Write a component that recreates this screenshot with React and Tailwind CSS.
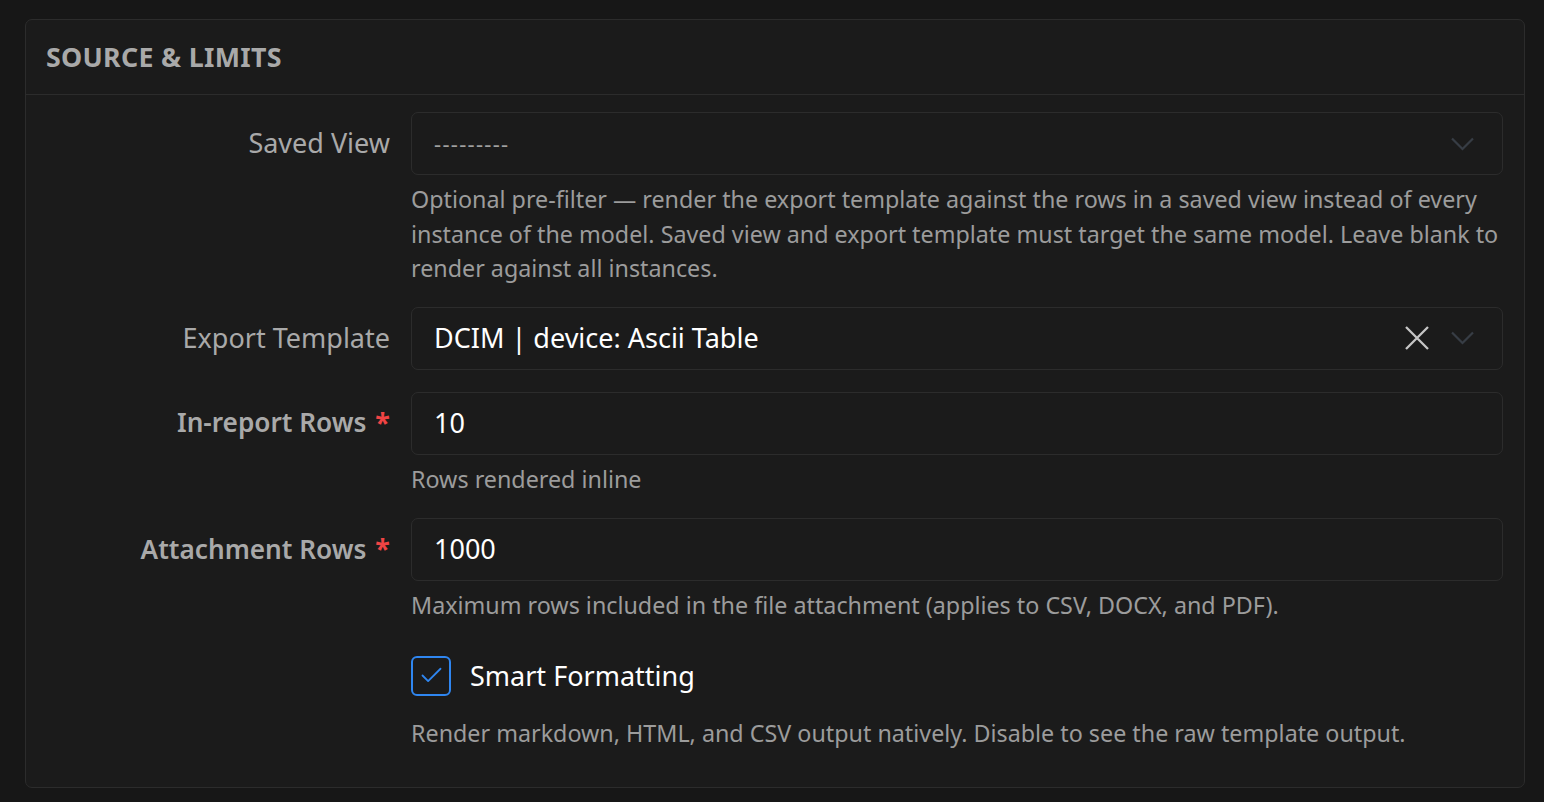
import { Check } from "lucide-react";

const font = { fontFamily: '"Noto Sans", "Open Sans", sans-serif' };

const Label = ({ children, required }) => (
  <div className="h-[63px] flex items-center justify-end text-[27px] text-[#a9a9a9]">
    <span className={required ? "font-semibold text-[26.2px]" : ""}>{children}</span>
    {required && <span className="ml-[9px] text-[#f04444] font-bold">*</span>}
  </div>
);

const Help = ({ children, className = "mt-[7px]" }) => (
  <p className={`${className} text-[23.3px] leading-[34.5px] text-[#9c9c9c]`}>{children}</p>
);

const Chevron = () => (
  <svg width="23" height="14" viewBox="0 0 23 14" fill="none" className="text-[#373d45]">
    <polyline points="1,1.5 11.5,12 22,1.5" stroke="currentColor" strokeWidth="2.2" />
  </svg>
);

const Clear = () => (
  <svg width="24" height="24" viewBox="0 0 24 24" fill="none" className="text-[#c6c6c6]">
    <path d="M1 1 23 23M23 1 1 23" stroke="currentColor" strokeWidth="2.3" />
  </svg>
);

const App = () => {
  return (
    <div className="min-h-screen bg-[#171717] pt-[19px] pl-[25px] pr-[19px] pb-[13px]" style={font}>
      <div className="rounded-[7px] border border-[#2c2c2c] bg-[#1b1b1b]">
        {/* Header */}
        <div className="h-[75px] flex items-center px-[20px] border-b border-[#2c2c2c]">
          <h2 className="text-[26.8px] font-bold tracking-[0.3px] text-[#a9a9a9]">
            SOURCE &amp; LIMITS
          </h2>
        </div>

        {/* Fields */}
        <div className="grid grid-cols-[364px_1fr] gap-x-[21px] pt-[17px] pr-[21px] pb-[36px]">
          {/* Saved View */}
          <Label>Saved View</Label>
          <div className="mb-[21px]">
            <div className="h-[63px] rounded-[7px] border border-[#2c2c2c] flex items-center pl-[22px] pr-[28px]">
              <span className="flex-1 text-[22px] text-[#a0a0a0] tracking-[1.3px]">---------</span>
              <Chevron />
            </div>
            <Help>
              Optional pre-filter — render the export template against the rows in a saved view
              instead of every instance of the model. Saved view and export template must target
              the same model. Leave blank to render against all instances.
            </Help>
          </div>

          {/* Export Template */}
          <Label>Export Template</Label>
          <div className="mb-[22px]">
            <div className="h-[63px] rounded-[7px] border border-[#2c2c2c] flex items-center pl-[22px] pr-[28px]">
              <span className="flex-1 text-[27px] text-white">DCIM | device: Ascii Table</span>
              <div className="mr-[22px] flex">
                <Clear />
              </div>
              <Chevron />
            </div>
          </div>

          {/* In-report Rows */}
          <Label required>In-report Rows</Label>
          <div className="mb-[22px]">
            <div className="h-[63px] rounded-[7px] border border-[#2c2c2c] flex items-center px-[22px]">
              <span className="text-[27px] text-white">10</span>
            </div>
            <Help>Rows rendered inline</Help>
          </div>

          {/* Attachment Rows */}
          <Label required>Attachment Rows</Label>
          <div>
            <div className="h-[63px] rounded-[7px] border border-[#2c2c2c] flex items-center px-[22px]">
              <span className="text-[27px] text-white">1000</span>
            </div>
            <Help>
              Maximum rows included in the file attachment (applies to CSV, DOCX, and PDF).
            </Help>
          </div>

          {/* Smart Formatting */}
          <div />
          <div className="pt-[33px]">
            <div className="flex items-center gap-[19px]">
              <div className="w-[40px] h-[40px] rounded-[6px] border-2 border-[#2f86f0] flex items-center justify-center">
                <Check className="text-[#2f86f0]" size={27} strokeWidth={1.6} />
              </div>
              <span className="text-[27px] text-white">Smart Formatting</span>
            </div>
            <Help className="mt-[20px]">
              Render markdown, HTML, and CSV output natively. Disable to see the raw template output.
            </Help>
          </div>
        </div>
      </div>
    </div>
  );
};

export default App;
